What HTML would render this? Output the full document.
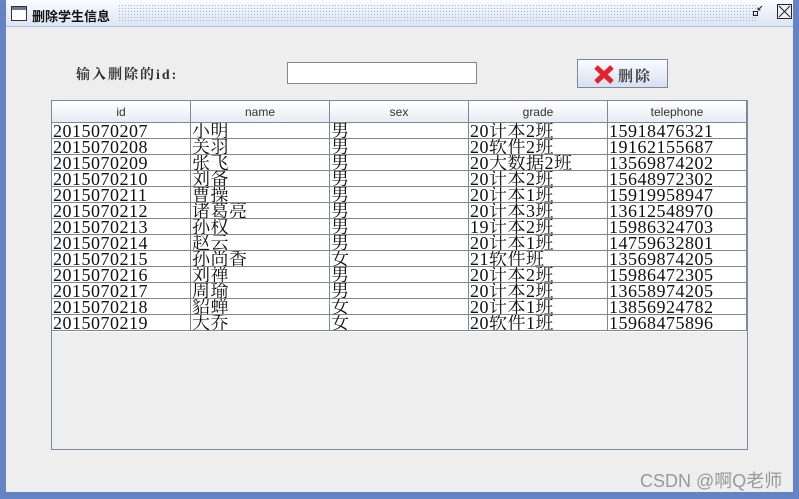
<!DOCTYPE html>
<html><head><meta charset="utf-8"><style>
*{margin:0;padding:0;box-sizing:border-box}
body{width:799px;height:499px;overflow:hidden;background:#6383c4;position:relative;font-family:"Liberation Sans","Noto Sans CJK SC",sans-serif}
.win{position:absolute;left:6px;top:0;width:787px;height:492px;background:#eeeeee}
.title{position:absolute;left:0;top:0;width:787px;height:27px;background:linear-gradient(#fafcff,#dbe5f3);border-bottom:1px solid #b0c0d8}
.dots{position:absolute;left:112px;top:4px;width:640px;height:18px;background-image:radial-gradient(#a7b6cf 0.7px,transparent 0.8px);background-size:3px 3px}
.ttxt{position:absolute;left:26px;top:6px;font-size:13px;color:#111;font-weight:bold}
.abs{position:absolute}
.serif{font-family:"Liberation Serif","Noto Serif CJK SC",serif}
.tbl{position:absolute;left:45px;top:100px;width:697px;height:350px;border:1px solid #7a8a9c;background:#eeeeee}
.hdr{position:absolute;top:0;height:22px;border-right:1px solid #7a8a9c;border-bottom:1px solid #7a8a9c;background:linear-gradient(#ffffff,#e7ecf3);font-size:12px;color:#333;text-align:center;line-height:22px}
.rows{position:absolute;left:0;top:22px;width:695px;height:209px;background:#fff}
.cell{position:absolute;height:16px;border-right:1px solid #7a8a9c;border-bottom:1px solid #7a8a9c;font-family:"Liberation Serif","Noto Serif CJK SC",serif;font-size:18px;line-height:16px;padding-left:1px;color:#111;white-space:nowrap;overflow:hidden;letter-spacing:0.5px}
</style></head><body>
<div class="win">
 <div class="title">
  <div class="dots"></div>
  <svg class="abs" style="left:5px;top:6px" width="16" height="15"><rect x="0.5" y="0.5" width="15" height="14" fill="#fff" stroke="#333"/><rect x="1" y="1" width="14" height="3" fill="#6a7a90"/></svg>
  <div class="ttxt">删除学生信息</div>
  <svg class="abs" style="left:746px;top:4px" width="14" height="14"><rect x="1.5" y="7.5" width="4" height="4" fill="none" stroke="#222"/><path d="M6 6 L10 2 M6 6 L6 3.5 M6 6 L8.5 6" stroke="#222" fill="none"/></svg>
  <svg class="abs" style="left:771px;top:4px" width="16" height="16"><rect x="0.5" y="0.5" width="14" height="14" fill="#eef2f8" stroke="#222"/><path d="M2 2 L13 13 M13 2 L2 13" stroke="#222"/></svg>
 </div>
 <div class="abs serif" style="left:70px;top:64px;font-size:14px;font-weight:bold;color:#333;letter-spacing:2px">输入删除的id:</div>
 <div class="abs" style="left:281px;top:62px;width:190px;height:22px;background:#fff;border:1px solid #7a8a9c"></div>
 <div class="abs" style="left:571px;top:59px;width:91px;height:29px;border:1px solid #7a8a9c;background:linear-gradient(#fafcff,#d6e1ef)">
  <svg class="abs" style="left:16px;top:5px" width="20" height="19"><path d="M2 2 L18 17 M18 2 L2 17" stroke="#e8202a" stroke-width="5"/></svg>
  <div class="abs serif" style="left:40px;top:5px;font-size:15px;font-weight:bold;color:#444;letter-spacing:2px">删除</div>
 </div>
 <div class="tbl">
  <div class="hdr" style="left:0;width:139px">id</div>
  <div class="hdr" style="left:139px;width:139px">name</div>
  <div class="hdr" style="left:278px;width:139px">sex</div>
  <div class="hdr" style="left:417px;width:139px">grade</div>
  <div class="hdr" style="left:556px;width:139px">telephone</div>
  <div class="rows" id="r"></div>
 </div>
 <div class="abs" style="left:634px;top:467px;font-size:18px;color:#999">CSDN @啊Q老师</div>
</div>
<script>
var d=[["2015070207","小明","男","20计本2班","15918476321"],["2015070208","关羽","男","20软件2班","19162155687"],["2015070209","张飞","男","20大数据2班","13569874202"],["2015070210","刘备","男","20计本2班","15648972302"],["2015070211","曹操","男","20计本1班","15919958947"],["2015070212","诸葛亮","男","20计本3班","13612548970"],["2015070213","孙权","男","19计本2班","15986324703"],["2015070214","赵云","男","20计本1班","14759632801"],["2015070215","孙尚香","女","21软件班","13569874205"],["2015070216","刘禅","男","20计本2班","15986472305"],["2015070217","周瑜","男","20计本2班","13658974205"],["2015070218","貂蝉","女","20计本1班","13856924782"],["2015070219","大乔","女","20软件1班","15968475896"]];
var h="";d.forEach(function(r,i){r.forEach(function(c,j){h+='<div class="cell" style="left:'+(j*139)+'px;top:'+(i*16)+'px;width:139px">'+c+'</div>';});});
document.getElementById("r").innerHTML=h;
</script>
</body></html>
